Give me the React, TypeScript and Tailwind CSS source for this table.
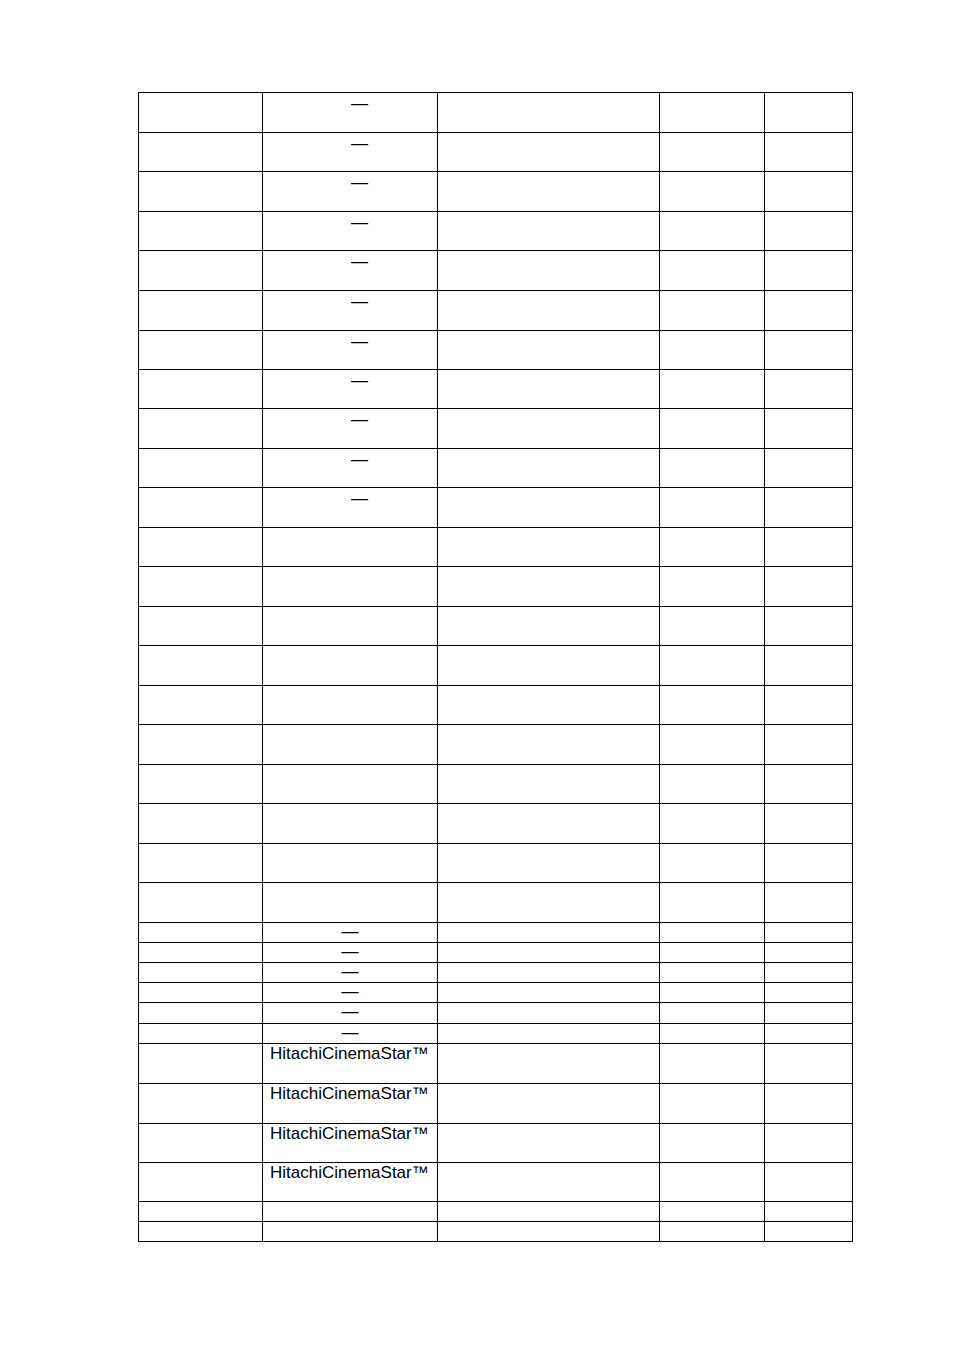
import React from "react";

type Kind = "dashTall" | "dashShort" | "empty" | "hitachi";

const heights = [
  40, 39, 40, 39, 40, 40, 39, 39, 40, 39, 40, 39, 40, 39, 40, 39, 40, 39, 40, 39, 40,
  20, 20, 20, 20, 21, 20,
  40, 40, 39, 39,
  20, 20,
];

function kindOf(i: number): Kind {
  if (i < 11) return "dashTall";
  if (i < 21) return "empty";
  if (i < 27) return "dashShort";
  if (i < 31) return "hitachi";
  return "empty";
}

const cellBase = "border-r border-b border-black shrink-0";

function Row({ h, kind }: { h: number; kind: Kind }) {
  return (
    <div className="flex" style={{ height: h }}>
      <div className={`${cellBase} w-[124px]`} />
      <div className={`${cellBase} w-[175px]`}>
        {kind === "dashTall" && (
          <div className="text-center leading-[18px] pt-[2px] pl-[19px]">—</div>
        )}
        {kind === "dashShort" && (
          <div className="text-center leading-[16px] pt-[1px]">—</div>
        )}
        {kind === "hitachi" && (
          <div className="leading-[19px] pl-[7px] whitespace-nowrap">HitachiCinemaStar™</div>
        )}
      </div>
      <div className={`${cellBase} w-[222px]`} />
      <div className={`${cellBase} w-[105px]`} />
      <div className={`${cellBase} w-[88px]`} />
    </div>
  );
}

export default function App() {
  return (
    <div
      className="w-[954px] min-h-[1350px] bg-white text-black text-[17px] pt-[92px] pl-[138px]"
      style={{ fontFamily: '"Liberation Sans", Arial, sans-serif' }}
    >
      <div className="w-[715px] border-t border-l border-black">
        {heights.map((h, i) => (
          <Row key={i} h={h} kind={kindOf(i)} />
        ))}
      </div>
    </div>
  );
}
